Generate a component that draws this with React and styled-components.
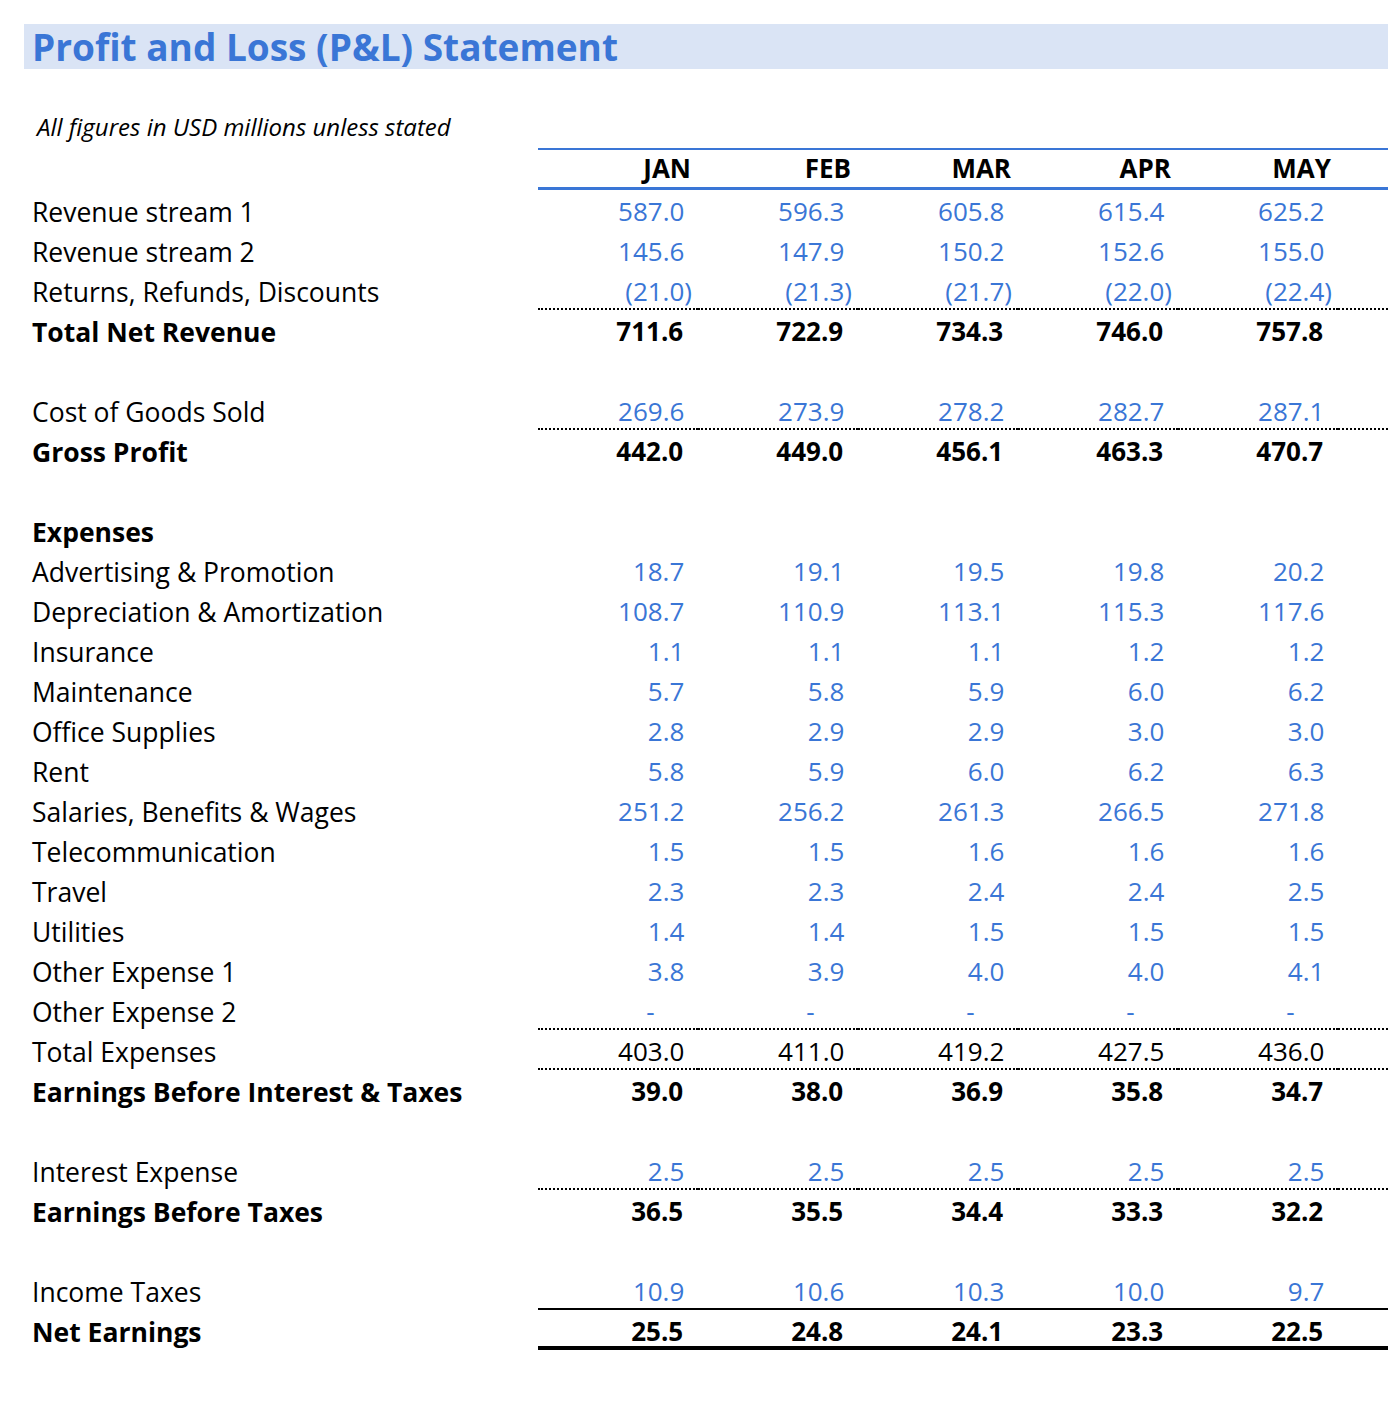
import React from "react";
import styled, { createGlobalStyle } from "styled-components";

const GlobalStyle = createGlobalStyle`
  body {
    margin: 0;
    background: #ffffff;
    font-family: "Open Sans", "Liberation Sans", sans-serif;
    color: #000000;
  }
`;

const INPUT_BLUE = "#3a76d6";
const MONTHS = ["JAN", "FEB", "MAR", "APR", "MAY"];

const Sheet = styled.div`
  width: 1388px;
  padding-top: 24px;
  padding-bottom: 60px;
`;

const TitleBar = styled.h1`
  margin: 0 0 0 24px;
  height: 45px;
  display: flex;
  align-items: center;
  padding-left: 8px;
  background: #dae4f5;
  color: ${INPUT_BLUE};
  font-size: 37px;
  font-weight: 700;
  line-height: 45px;
`;

const Note = styled.div`
  margin-top: 46px;
  padding-left: 37px;
  height: 24px;
  font-size: 24px;
  font-style: italic;
  line-height: 24px;
`;

const Table = styled.div`
  margin-top: 9px;
  display: grid;
  grid-template-columns: 538px repeat(5, 160px) 50px;
`;

const HeadCell = styled.div`
  height: 42px;
  box-sizing: border-box;
  border-top: 2px solid ${INPUT_BLUE};
  border-bottom: 3px solid ${INPUT_BLUE};
  display: flex;
  align-items: center;
  justify-content: flex-end;
  padding-right: 7px;
  padding-bottom: 1px;
  font-size: 26px;
  font-weight: 700;
`;

const borders = {
  none: "none",
  dotted: "2px dotted #000",
  solid: "2px solid #000",
  thick: "4px solid #000",
};

const lineShift = { none: 0, dotted: 1, solid: 1, thick: 3 };

const Label = styled.div`
  height: 40px;
  box-sizing: border-box;
  padding-left: 32px;
  padding-top: 4px;
  display: flex;
  align-items: center;
  font-size: 26.5px;
  font-weight: ${(p) => (p.$bold ? 700 : 400)};
  white-space: nowrap;
`;

const Cell = styled.div`
  height: 40px;
  box-sizing: border-box;
  border-bottom: ${(p) => borders[p.$line]};
  display: flex;
  align-items: center;
  justify-content: flex-end;
  padding-right: 6px;
  padding-top: ${(p) => 2 + lineShift[p.$line]}px;
  font-size: 26px;
  font-weight: ${(p) => (p.$bold ? 700 : 400)};
  color: ${(p) => (p.$input ? INPUT_BLUE : "#000")};
  white-space: pre;
`;

const Ghost = styled.span`
  visibility: hidden;
`;

function Amount({ value }) {
  if (value === null) return null;
  if (value === 0) {
    return (
      <span>
        -<Ghost>00)</Ghost>
      </span>
    );
  }
  if (value < 0) return <span>({Math.abs(value).toFixed(1)})</span>;
  return (
    <span>
      {value.toFixed(1)}
      <Ghost>)</Ghost>
    </span>
  );
}

const rows = [
  { label: "Revenue stream 1", input: true, values: [587.0, 596.3, 605.8, 615.4, 625.2] },
  { label: "Revenue stream 2", input: true, values: [145.6, 147.9, 150.2, 152.6, 155.0] },
  { label: "Returns, Refunds, Discounts", input: true, line: "dotted", values: [-21.0, -21.3, -21.7, -22.0, -22.4] },
  { label: "Total Net Revenue", bold: true, values: [711.6, 722.9, 734.3, 746.0, 757.8] },
  { label: "" },
  { label: "Cost of Goods Sold", input: true, line: "dotted", values: [269.6, 273.9, 278.2, 282.7, 287.1] },
  { label: "Gross Profit", bold: true, values: [442.0, 449.0, 456.1, 463.3, 470.7] },
  { label: "" },
  { label: "Expenses", bold: true },
  { label: "Advertising & Promotion", input: true, values: [18.7, 19.1, 19.5, 19.8, 20.2] },
  { label: "Depreciation & Amortization", input: true, values: [108.7, 110.9, 113.1, 115.3, 117.6] },
  { label: "Insurance", input: true, values: [1.1, 1.1, 1.1, 1.2, 1.2] },
  { label: "Maintenance", input: true, values: [5.7, 5.8, 5.9, 6.0, 6.2] },
  { label: "Office Supplies", input: true, values: [2.8, 2.9, 2.9, 3.0, 3.0] },
  { label: "Rent", input: true, values: [5.8, 5.9, 6.0, 6.2, 6.3] },
  { label: "Salaries, Benefits & Wages", input: true, values: [251.2, 256.2, 261.3, 266.5, 271.8] },
  { label: "Telecommunication", input: true, values: [1.5, 1.5, 1.6, 1.6, 1.6] },
  { label: "Travel", input: true, values: [2.3, 2.3, 2.4, 2.4, 2.5] },
  { label: "Utilities", input: true, values: [1.4, 1.4, 1.5, 1.5, 1.5] },
  { label: "Other Expense 1", input: true, values: [3.8, 3.9, 4.0, 4.0, 4.1] },
  { label: "Other Expense 2", input: true, line: "dotted", values: [0, 0, 0, 0, 0] },
  { label: "Total Expenses", line: "dotted", values: [403.0, 411.0, 419.2, 427.5, 436.0] },
  { label: "Earnings Before Interest & Taxes", bold: true, values: [39.0, 38.0, 36.9, 35.8, 34.7] },
  { label: "" },
  { label: "Interest Expense", input: true, line: "dotted", values: [2.5, 2.5, 2.5, 2.5, 2.5] },
  { label: "Earnings Before Taxes", bold: true, values: [36.5, 35.5, 34.4, 33.3, 32.2] },
  { label: "" },
  { label: "Income Taxes", input: true, line: "solid", values: [10.9, 10.6, 10.3, 10.0, 9.7] },
  { label: "Net Earnings", bold: true, line: "thick", values: [25.5, 24.8, 24.1, 23.3, 22.5] },
];

const App = () => {
  return (
    <Sheet>
      <GlobalStyle />
      <TitleBar>Profit and Loss (P&amp;L) Statement</TitleBar>
      <Note>All figures in USD millions unless stated</Note>
      <Table>
        <div />
        {MONTHS.map((m) => (
          <HeadCell key={m}>{m}</HeadCell>
        ))}
        <HeadCell />
        {rows.map((row, i) => {
          const line = row.line || "none";
          const values = row.values || [null, null, null, null, null];
          return (
            <React.Fragment key={i}>
              <Label $bold={row.bold}>{row.label}</Label>
              {values.map((v, j) => (
                <Cell key={j} $line={line} $bold={row.bold} $input={row.input}>
                  <Amount value={v} />
                </Cell>
              ))}
              <Cell $line={line} />
            </React.Fragment>
          );
        })}
      </Table>
    </Sheet>
  );
};

export default App;
